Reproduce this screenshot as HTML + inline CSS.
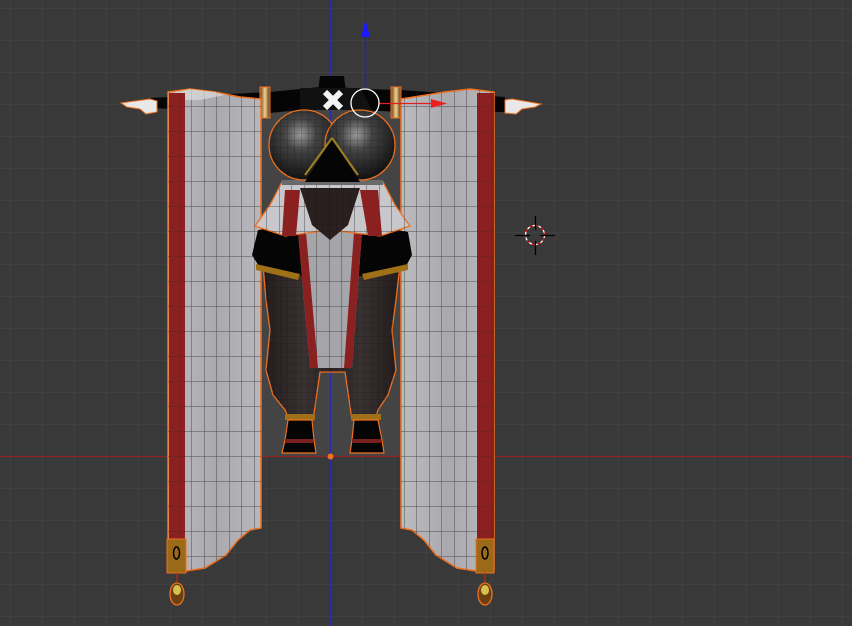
<!DOCTYPE html>
<html><head><meta charset="utf-8"><style>
html,body{margin:0;padding:0;background:#393939;overflow:hidden}
svg{display:block}
</style></head><body>
<svg width="852" height="626" viewBox="0 0 852 626" xmlns="http://www.w3.org/2000/svg">
<defs>
<pattern id="grid" x="10" y="8" width="32" height="32" patternUnits="userSpaceOnUse">
<path d="M0 0H32M0 0V32" stroke="#434343" stroke-width="1.2" fill="none"/>
</pattern>
<pattern id="mesh" x="4" y="6" width="12.5" height="25" patternUnits="userSpaceOnUse">
<path d="M0 0H12.5M0 0V25" stroke="#2a2a2a" stroke-width="1" fill="none" opacity="0.75"/>
</pattern>
<pattern id="dmesh" x="0" y="0" width="7" height="7" patternUnits="userSpaceOnUse">
<path d="M0 0H7M0 0V7" stroke="#0c0c0c" stroke-width="0.6" fill="none" opacity="0.6"/>
</pattern>
<linearGradient id="cloth" x1="0" x2="1">
<stop offset="0" stop-color="#bcbcc0"/><stop offset="0.5" stop-color="#aaaaae"/><stop offset="1" stop-color="#b8b8bc"/>
</linearGradient>
<radialGradient id="br" cx="0.45" cy="0.35" r="0.65">
<stop offset="0" stop-color="#9a9a9a"/><stop offset="0.35" stop-color="#444"/><stop offset="1" stop-color="#111"/>
</radialGradient>
<linearGradient id="gold" x1="0" x2="1">
<stop offset="0" stop-color="#6a3d10"/><stop offset="0.5" stop-color="#f0d090"/><stop offset="1" stop-color="#5a300a"/>
</linearGradient>
<linearGradient id="leg" x1="0" x2="1">
<stop offset="0" stop-color="#231c1c"/><stop offset="0.3" stop-color="#3a3232"/><stop offset="0.5" stop-color="#2a2222"/><stop offset="0.7" stop-color="#3a3232"/><stop offset="1" stop-color="#231c1c"/>
</linearGradient>
</defs>
<rect width="852" height="626" fill="#393939"/>
<rect width="852" height="626" fill="url(#grid)"/>
<rect x="262" y="100" width="139" height="356" fill="#444"/>
<line x1="0" y1="456.5" x2="852" y2="456.5" stroke="#8c2626" stroke-width="1.3"/>
<line x1="330.5" y1="0" x2="330.5" y2="626" stroke="#2a2aa8" stroke-width="1.3"/>

<!-- arms -->
<path d="M150 98 L270 92 L300 89 L330 86 L360 89 L400 90 L505 97 L505 112 L400 112 L360 110 L300 110 L270 113 L150 108Z" fill="#050505"/>
<path d="M121 103 L150 99 L157 101 L157 112 L146 114 L140 109 L127 107Z" fill="#e8e8e8" stroke="#f07020" stroke-width="1"/>
<path d="M541 104 L512 99 L505 100 L505 113 L516 114 L522 109 L535 107Z" fill="#e8e8e8" stroke="#f07020" stroke-width="1"/>
<rect x="260" y="87" width="10" height="31" fill="url(#gold)" stroke="#f07020" stroke-width="1"/>
<rect x="391" y="87" width="10" height="31" fill="url(#gold)" stroke="#f07020" stroke-width="1"/>

<!-- left drape -->
<g>
<path d="M168 92 L190 89 L215 92 L240 97 L261 99 L261 528 L250 530 L238 540 L226 555 L205 568 L186 571 L168 571Z" fill="url(#cloth)" stroke="#f07020" stroke-width="1.5"/>
<path d="M168 92 L190 89 L215 92 L240 97 L261 99 L261 528 L250 530 L238 540 L226 555 L205 568 L186 571 L168 571Z" fill="url(#mesh)"/>
<path d="M175 92 L190 89 L215 92 L225 95 L200 100 L175 100Z" fill="#dcdcdc" opacity="0.7"/>
<rect x="169" y="93" width="16" height="447" fill="#8a2020"/>
<rect x="169" y="93" width="16" height="447" fill="url(#mesh)" opacity="0.6"/>
<rect x="167" y="539" width="19" height="34" fill="#9a6a18" stroke="#f07020" stroke-width="1"/>
<ellipse cx="176.5" cy="553" rx="3" ry="6" fill="none" stroke="#000" stroke-width="1.5"/>
<line x1="177" y1="573" x2="177" y2="582" stroke="#a03010" stroke-width="1.5"/>
<ellipse cx="177" cy="594" rx="7" ry="11" fill="#6a4010" stroke="#f07020" stroke-width="1.3"/>
<ellipse cx="177" cy="590" rx="4" ry="5" fill="#d8c050"/>
</g>
<!-- right drape -->
<g>
<path d="M401 99 L420 96 L445 92 L470 89 L494 92 L494 571 L476 571 L457 568 L436 555 L424 540 L412 530 L401 528Z" fill="url(#cloth)" stroke="#f07020" stroke-width="1.5"/>
<path d="M401 99 L420 96 L445 92 L470 89 L494 92 L494 571 L476 571 L457 568 L436 555 L424 540 L412 530 L401 528Z" fill="url(#mesh)"/>
<rect x="477" y="93" width="17" height="447" fill="#8a2020"/>
<rect x="477" y="93" width="17" height="447" fill="url(#mesh)" opacity="0.6"/>
<rect x="476" y="539" width="18" height="34" fill="#9a6a18" stroke="#f07020" stroke-width="1"/>
<ellipse cx="485" cy="553" rx="3" ry="6" fill="none" stroke="#000" stroke-width="1.5"/>
<line x1="485" y1="573" x2="485" y2="582" stroke="#a03010" stroke-width="1.5"/>
<ellipse cx="485" cy="594" rx="7" ry="11" fill="#6a4010" stroke="#f07020" stroke-width="1.3"/>
<ellipse cx="485" cy="590" rx="4" ry="5" fill="#d8c050"/>
</g>

<path d="M320 76 L344 76 L346 92 L318 92Z" fill="#050505"/>
<!-- legs -->
<path d="M263 265 L330 262 L400 265 L396 300 L392 330 L396 370 L388 395 L378 410 L375 420 L352 420 L345 372 L320 372 L313 420 L290 420 L285 410 L273 395 L266 370 L270 330 L266 300Z" fill="url(#leg)" stroke="#f07020" stroke-width="1.3"/>
<path d="M263 265 L330 262 L400 265 L396 300 L392 330 L396 370 L388 395 L378 410 L375 420 L352 420 L345 372 L320 372 L313 420 L290 420 L285 410 L273 395 L266 370 L270 330 L266 300Z" fill="url(#dmesh)"/>
<!-- hips -->
<path d="M258 230 L300 226 L370 226 L408 232 L412 255 L405 268 L370 276 L300 276 L260 268 L252 255Z" fill="#050505"/>
<path d="M256 264 L300 274 L298 280 L256 270Z" fill="#a07018"/>
<path d="M408 264 L362 274 L364 280 L408 270Z" fill="#a07018"/>
<!-- apron -->
<path d="M298 232 L362 232 L352 368 L310 368Z" fill="#a6a6aa"/>
<path d="M298 232 L362 232 L352 368 L310 368Z" fill="url(#mesh)"/>
<path d="M298 232 L306 232 L318 368 L310 368Z" fill="#8a2020"/>
<path d="M354 232 L362 232 L352 368 L344 368Z" fill="#8a2020"/>
<rect x="285" y="414" width="30" height="6" fill="#a07018"/>
<rect x="351" y="414" width="30" height="6" fill="#a07018"/>
<path d="M288 420 L312 420 L314 440 L316 453 L282 453 L285 440Z" fill="#050505" stroke="#f07020" stroke-width="1.2"/>
<path d="M354 420 L378 420 L382 440 L384 453 L350 453 L352 440Z" fill="#050505" stroke="#f07020" stroke-width="1.2"/>
<rect x="285" y="439" width="28" height="4" fill="#7a2020"/>
<rect x="352" y="439" width="29" height="4" fill="#7a2020"/>
<!-- skirt -->
<path d="M282 182 L383 182 L395 205 L410 226 L380 236 L330 230 L285 236 L255 226 L270 205Z" fill="#c8c8cc" stroke="#f07020" stroke-width="1.3"/>
<path d="M282 182 L383 182 L395 205 L410 226 L380 236 L330 230 L285 236 L255 226 L270 205Z" fill="url(#mesh)"/>
<path d="M285 190 L300 190 L296 236 L282 236Z" fill="#8a2020"/>
<path d="M360 190 L378 190 L382 236 L368 236Z" fill="#8a2020"/>
<path d="M300 188 L360 188 L348 225 L330 240 L312 225Z" fill="#2a2020"/>
<path d="M300 188 L360 188 L348 225 L330 240 L312 225Z" fill="url(#dmesh)"/>
<rect x="282" y="180" width="101" height="5" fill="#6a6a6a"/>
<!-- chest -->
<path d="M300 88 L360 88 L372 110 L300 110Z" fill="#111"/>
<circle cx="304" cy="145" r="35" fill="url(#br)" stroke="#f07020" stroke-width="1.3"/>
<circle cx="360" cy="145" r="35" fill="url(#br)" stroke="#f07020" stroke-width="1.3"/>
<circle cx="304" cy="145" r="35" fill="url(#dmesh)"/>
<circle cx="360" cy="145" r="35" fill="url(#dmesh)"/>
<path d="M332 138 L305 182 L360 182Z" fill="#050505"/>
<path d="M332 138 L305 175 M332 138 L358 175" stroke="#a08020" stroke-width="2" fill="none"/>
<path d="M325 92 L341 108 M341 92 L325 108" stroke="#f4f4f4" stroke-width="6"/>
<!-- gizmo -->
<line x1="365.5" y1="34" x2="365.5" y2="89" stroke="#1a1aff" stroke-width="1.3"/>
<path d="M365.5 20 L361 37 L370 37Z" fill="#1a1aff"/>
<line x1="379" y1="103.5" x2="432" y2="103.5" stroke="#e02020" stroke-width="1.3"/>
<path d="M447 103.5 L431 99 L431 108Z" fill="#e82020"/>
<circle cx="365" cy="103" r="14" fill="none" stroke="#fff" stroke-width="1.3"/>
<circle cx="330.5" cy="456.5" r="3" fill="#f07020"/>
<circle cx="535" cy="235" r="9.5" fill="none" stroke="#fff" stroke-width="1.3" stroke-dasharray="3 3"/>
<circle cx="535" cy="235" r="9.5" fill="none" stroke="#e01010" stroke-width="1.3" stroke-dasharray="3 3" stroke-dashoffset="3"/>
<path d="M515 235.5H530M540 235.5H555M535.5 216V230M535.5 241V255" stroke="#000" stroke-width="1.3"/>
</svg>
</body></html>
